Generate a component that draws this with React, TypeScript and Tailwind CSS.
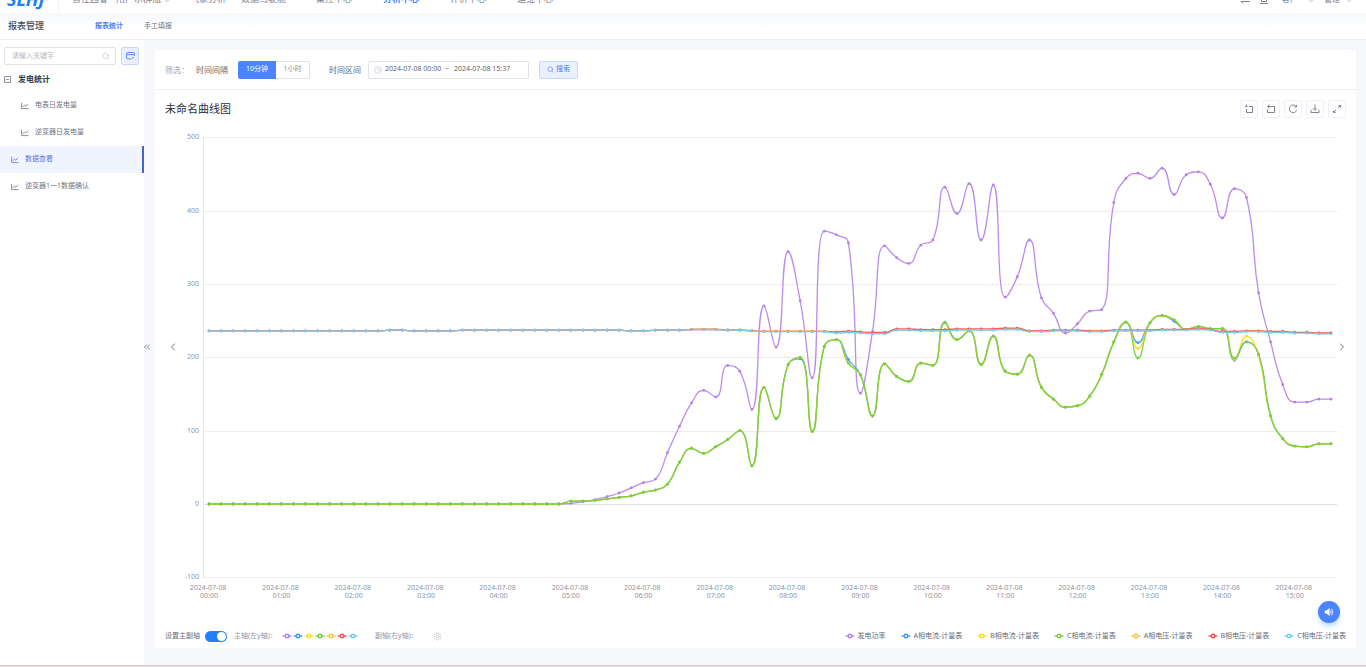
import { useId, useState } from 'react'
import type { ReactNode } from 'react'
import { ChevronDown, ChevronLeft, ChevronRight, ChevronsLeft, Clock, Search, Settings } from 'lucide-react'

type Series = { name: string; color: string; data: number[] }

const zeros: number[] = Array(30).fill(0)

const power = [
  ...zeros,
  1, 3, 6, 10, 15, 22, 29, 34, 70, 106, 138, 155, 146, 189, 181, 129, 270, 214, 344, 277, 172, 372, 367, 356,
  151, 235, 352, 336, 328, 353, 360, 432, 396, 437, 360, 435, 282, 310, 360, 281, 260, 233, 246, 263, 265, 411,
  444, 451, 444, 458, 422, 449, 453, 436, 390, 430, 418, 288, 221, 163, 139, 139, 143, 143,
]

const currentC = [
  ...zeros,
  4, 4, 5, 7, 9, 11, 16, 19, 27, 57, 76, 69, 78, 88, 100, 52, 159, 117, 190, 200, 99, 215, 224, 192,
  176, 120, 191, 174, 167, 192, 189, 247, 224, 236, 190, 229, 181, 177, 203, 159, 143, 132, 134, 147, 177, 221,
  248, 199, 247, 257, 251, 238, 242, 239, 239, 199, 221, 204, 120, 89, 79, 78, 82, 82,
]

const voltageC = [
  236, 236, 236, 236, 236, 236, 236, 236, 236, 236, 236, 236, 236, 236, 236, 237, 237, 236, 236, 236, 236, 237,
  237, 237, 237, 237, 237, 237, 237, 237, 237, 237, 237, 237, 237, 236, 236, 237, 237, 237, 238, 238, 238, 237,
  237, 236, 235, 235, 235, 235, 235, 235, 233, 234, 233, 232, 232, 237, 237, 236, 236, 236, 237, 237, 237, 237,
  238, 238, 235, 235, 236, 236, 236, 235, 235, 236, 236, 236, 236, 237, 237, 237, 238, 237, 234, 234, 235, 235,
  234, 234, 233, 233, 232, 232,
]

const withPoints = (data: number[], points: Record<number, number>) => data.map((v, i) => points[i] ?? v)

const currentA = withPoints(currentC, { 47: 116, 49: 198, 53: 197, 61: 248, 77: 220, 80: 249, 85: 196 })
const currentB = withPoints(currentC, { 77: 212, 85: 197, 86: 229, 87: 202 })
const voltageA = voltageC.map((v, i) => (i > 40 ? v + 0.6 : v))
const voltageB = voltageC.map((v, i) => (i > 67 ? v + 1.2 : i > 51 ? v + 1.8 : i > 45 ? v + 0.5 : v))

const series: Series[] = [
  { name: '发电功率', color: '#b37feb', data: power },
  { name: 'A相电流-计量表', color: '#4096ff', data: currentA },
  { name: 'B相电流-计量表', color: '#fadb14', data: currentB },
  { name: 'C相电流-计量表', color: '#73d13d', data: currentC },
  { name: 'A相电压-计量表', color: '#ffc53d', data: voltageA },
  { name: 'B相电压-计量表', color: '#ff4d4f', data: voltageB },
  { name: 'C相电压-计量表', color: '#72cdf7', data: voltageC },
]

const CHART = { width: 1158, height: 476, left: 23, right: 1157, zero: 376, unit: 440 / 600 }
const step = (CHART.right - CHART.left) / power.length
const px = (i: number) => CHART.left + step * (i + 0.5)
const py = (v: number) => CHART.zero - v * CHART.unit

const clamp = (v: number, a: number, b: number) => Math.min(Math.max(v, Math.min(a, b)), Math.max(a, b))

// bezier smoothing that never overshoots the neighbouring points
function smoothPath(data: number[]) {
  const pts = data.map((v, i) => [px(i), py(v)])
  let d = `M${pts[0][0]} ${pts[0][1]}`
  let c0 = pts[0]
  for (let i = 1; i < pts.length; i++) {
    const [x, y] = pts[i]
    const prev = pts[i - 1]
    const next = pts[i + 1]
    let c1 = [x, y]
    let nextC0 = [x, y]
    if (next) {
      const lenPrev = Math.hypot(x - prev[0], y - prev[1])
      const lenNext = Math.hypot(next[0] - x, next[1] - y)
      const ratio = lenNext / (lenPrev + lenNext)
      nextC0 = [0, 1].map(k =>
        clamp(pts[i][k] + (next[k] - prev[k]) * 0.5 * ratio, pts[i][k], next[k]),
      )
      c1 = [0, 1].map(k =>
        clamp(pts[i][k] - ((nextC0[k] - pts[i][k]) * lenPrev) / lenNext, prev[k], pts[i][k]),
      )
      nextC0 = [0, 1].map(k => pts[i][k] + ((pts[i][k] - c1[k]) * lenNext) / lenPrev)
    }
    d += `C${c0[0].toFixed(1)} ${c0[1].toFixed(1)} ${c1[0].toFixed(1)} ${c1[1].toFixed(1)} ${x.toFixed(1)} ${y.toFixed(1)}`
    c0 = nextC0
  }
  return d
}

function Chart() {
  return (
    <svg viewBox={`0 0 ${CHART.width} ${CHART.height}`} className="h-auto min-w-0 flex-1" role="img" aria-label="未命名曲线图">
      <g shapeRendering="crispEdges">
        {[500, 400, 300, 200, 100, 0, -100].map(v => (
          <line
            key={v}
            x1={CHART.left}
            x2={CHART.right}
            y1={Math.round(py(v)) + 0.5}
            y2={Math.round(py(v)) + 0.5}
            stroke={v === 0 ? '#dcdee8' : '#e6e7ee'}
            strokeDasharray={v === 0 ? undefined : '3 1'}
          />
        ))}
        <line x1={CHART.left + 0.5} x2={CHART.left + 0.5} y1={py(500)} y2={py(-100)} stroke="#e4e6ef" />
      </g>
      <g fontSize="7" fill="#8f95a5">
        {[500, 400, 300, 200, 100, 0, -100].map(v => (
          <text key={v} x={CHART.left - 4} y={py(v) + 2} textAnchor="end">
            {v}
          </text>
        ))}
        {Array.from({ length: 16 }, (_, h) => (
          <g key={h} textAnchor="middle">
            <text x={px(h * 6) - 1} y={462}>2024-07-08</text>
            <text x={px(h * 6)} y={470}>{`${String(h).padStart(2, '0')}:00`}</text>
          </g>
        ))}
      </g>
      {series.map(s => (
        <g key={s.name}>
          <path d={smoothPath(s.data)} fill="none" stroke={s.color} strokeWidth="1.3" opacity="0.9" />
          {s.data.map((v, i) => (
            <circle key={i} cx={px(i)} cy={py(v)} r="1.4" fill={s.color} />
          ))}
        </g>
      ))}
    </svg>
  )
}

function Marker({ color }: { color: string }) {
  return (
    <svg width="10" height="8" viewBox="0 0 10 8" className="shrink-0">
      <path d="M0.5 4H9.5" stroke={color} strokeWidth="1.3" />
      <circle cx="5" cy="4" r="1.8" fill="#fff" stroke={color} strokeWidth="1.4" />
    </svg>
  )
}

function LineIcon() {
  return (
    <svg width="8" height="8" viewBox="0 0 8 8" fill="none" stroke="currentColor" strokeWidth="0.8" className="shrink-0">
      <path d="M0.6 0.8V6.6H7.6M1.8 4.8L3.4 3L4.8 4.2L7.2 1.8" />
    </svg>
  )
}

function MenuItem({ label, nested, active }: { label: string; nested?: boolean; active?: boolean }) {
  return (
    <a
      href="#"
      className={`flex h-[27px] items-center gap-[6px] text-[7px] ${nested ? 'pl-[21px]' : 'pl-[11px]'} ${
        active ? 'border-r-2 border-[#4465c9] bg-[#eff4ff] text-[#5b78dc]' : 'text-[#6f7480]'
      }`}
    >
      <LineIcon />
      {label}
    </a>
  )
}

function ToolButton({ label, children }: { label: string; children: ReactNode }) {
  return (
    <button aria-label={label} className="flex size-[18px] items-center justify-center rounded-xs border border-[#f0f1f8] text-[#7d8496]">
      <svg width="10" height="10" viewBox="0 0 10 10" fill="none" stroke="currentColor" strokeWidth="1">
        {children}
      </svg>
    </button>
  )
}

function TopBar() {
  return (
    <header className="flex h-[13px] items-end overflow-hidden bg-white text-[9px] leading-[14px] text-[#7b8291]">
      <a href="#" className="w-[59px] shrink-0 border-r border-[#f1f2f5] pb-[5px] pl-[7px] text-[18px] font-bold leading-[18px] text-[#2080f0] italic">
        SLHJ
      </a>
      <span className="w-[57px] shrink-0 pb-[7px] pl-[13px]">晋江园睿</span>
      <button className="flex w-[74px] shrink-0 items-end gap-[3px] pb-[7px]">
        用户水群瓶
        <ChevronDown size={6} className="mb-[2px]" />
      </button>
      <nav className="flex flex-1 pb-[7px]">
        <a href="#" className="w-[51px]">气象分析</a>
        <a href="#" className="w-[75px]">数据驾驶舱</a>
        <a href="#" className="w-[67px]">集控中心</a>
        <a href="#" className="w-[67px] font-bold text-[#3d7fff]">分析中心</a>
        <a href="#" className="w-[67px]">评价中心</a>
        <a href="#">运维中心</a>
      </nav>
      <div className="flex items-end gap-[10px] pr-[14px] pb-[7px] text-[8px]">
        <svg width="10" height="8" viewBox="0 0 10 8" fill="none" stroke="currentColor" className="mb-[2px]">
          <path d="M0 2.5H9L7 0.5M10 5.5H1L3 7.5" />
        </svg>
        <svg width="8" height="8" viewBox="0 0 8 8" fill="none" stroke="currentColor" className="mb-[2px]">
          <path d="M1.5 0.5H6.5V5.5H1.5ZM0 7.5H8" />
        </svg>
        <button className="flex items-end gap-[10px] pl-1">
          客户
          <ChevronDown size={6} className="mb-[2px]" />
        </button>
        <button className="flex items-end gap-[6px]">
          管理
          <ChevronDown size={6} className="mb-[2px]" />
        </button>
      </div>
    </header>
  )
}

function Sidebar() {
  const searchId = useId()
  return (
    <aside className="w-[144px] shrink-0 bg-white text-[8px]">
      <div className="flex gap-[5px] px-1 pt-[7px]">
        <label htmlFor={searchId} className="flex h-[18px] w-[112px] items-center rounded-xs border border-[#dfe2e8] pr-[5px] pl-[7px]">
          <input id={searchId} aria-label="关键字" placeholder="请输入关键字" className="w-full min-w-0 text-[7px] outline-none placeholder:text-[#b4b8c1]" />
          <Search size={8} strokeWidth={1.5} className="shrink-0 text-[#b0b5c0]" />
        </label>
        <button aria-label="新建" className="flex size-[18px] items-center justify-center rounded-xs border border-[#c6d8ff] bg-[#e9f0ff] text-[#4a80f5]">
          <svg width="9" height="8" viewBox="0 0 9 8" fill="none" stroke="currentColor" strokeWidth="0.9">
            <path d="M8.3 4V1.2Q8.3 0.5 7.6 0.5H1.4Q0.7 0.5 0.7 1.2V6.2Q0.7 6.9 1.4 6.9H5M0.7 2.6H8.3M5.6 6.9L8 5" />
          </svg>
        </button>
      </div>
      <div className="mt-[2px] flex h-[24px] items-center gap-[7px] pl-1 font-bold text-[#363b47]">
        <svg width="7" height="7" viewBox="0 0 7 7" fill="none" stroke="#737985" strokeWidth="0.8">
          <path d="M0.5 0.5H6.5V6.5H0.5ZM2 3.5H5" />
        </svg>
        发电统计
      </div>
      <nav className="mt-[1px]">
        <MenuItem label="电表日发电量" nested />
        <MenuItem label="逆变器日发电量" nested />
        <MenuItem label="数据查看" active />
        <MenuItem label="逆变器1一1数据确认" />
      </nav>
    </aside>
  )
}

function Filters() {
  const [unit, setUnit] = useState('10分钟')
  return (
    <div className="flex h-[40px] items-center border-b border-[#eeeff3] pl-[10px] text-[8px]">
      <span className="w-[31px] text-[#a3a8b3]">筛选：</span>
      <span className="w-[42px] text-[#666a70]">时间间隔</span>
      <div className="flex h-[18px] text-[7px]">
        {['10分钟', '1小时'].map(u => (
          <button
            key={u}
            onClick={() => setUnit(u)}
            className={
              u === unit
                ? 'w-[38px] rounded-l-xs bg-[#4a85ff] text-white'
                : 'w-[34px] rounded-r-xs border border-l-0 border-[#dfe2e8] text-[#8a8f9b]'
            }
          >
            {u}
          </button>
        ))}
      </div>
      <label htmlFor="from" className="ml-[19px] w-[39px] text-[#666a70]">时间区间</label>
      <div className="flex h-[18px] w-[161px] items-center rounded-xs border border-[#dfe2e8] pl-[5px] text-[7px] text-[#62666f]">
        <Clock size={8} strokeWidth={1.5} className="mr-[3px] shrink-0 text-[#b0b5c0]" />
        <input id="from" defaultValue="2024-07-08 00:00" className="w-[58px] outline-none" />
        <span className="w-[11px] pl-[2px]">~</span>
        <input aria-label="结束时间" defaultValue="2024-07-08 15:37" className="w-[58px] outline-none" />
      </div>
      <button className="ml-[10px] flex h-[18px] w-[39px] items-center justify-center gap-[2px] rounded-xs border border-[#c6d8ff] bg-[#e9f0ff] text-[7px] text-[#4a80f5]">
        <Search size={7} strokeWidth={2} />
        搜索
      </button>
    </div>
  )
}

function ChartFooter() {
  const [dual, setDual] = useState(true)
  return (
    <div className="flex h-[24px] items-center px-[10px] text-[7px] whitespace-nowrap text-[#9398a5]">
      <label htmlFor="dual" className="w-[40px] text-[#6c717d]">设置主副轴</label>
      <span className="relative mr-[7px] h-[11px] w-[22px]">
        <input
          id="dual"
          type="checkbox"
          role="switch"
          checked={dual}
          onChange={e => setDual(e.target.checked)}
          className="block h-[11px] w-[22px] appearance-none rounded-full bg-gray-300 checked:bg-[#2080ff]"
        />
        <span className={`pointer-events-none absolute top-px size-[9px] rounded-full bg-white ${dual ? 'right-px' : 'left-px'}`} />
      </span>
      <span className="w-[48px]">主轴(左y轴)：</span>
      <span className="flex gap-[1px]">
        {series.map(s => (
          <Marker key={s.name} color={s.color} />
        ))}
      </span>
      <span className="ml-[17px] w-[58px]">副轴(右y轴)：</span>
      <button aria-label="设置">
        <Settings size={9} strokeWidth={1.6} className="text-[#b4b8c1]" />
      </button>
      <ul className="ml-auto flex gap-[15px] text-[#666b76]">
        {series.map(s => (
          <li key={s.name} className="flex items-center gap-[3px]">
            <Marker color={s.color} />
            {s.name}
          </li>
        ))}
      </ul>
    </div>
  )
}

export default function App() {
  return (
    <div className="flex min-h-screen flex-col bg-[#f6f8fb] font-['Noto_Sans','Noto_Sans_CJK_SC',sans-serif]">
      <TopBar />
      <div className="flex h-[27px] items-center border-b border-[#eeeff3] bg-linear-to-b from-[#f6f8fa] to-white to-60% pl-2 text-[7px] text-[#6c717d]">
        <h1 className="w-[87px] text-[9px] font-medium text-[#454b59]">报表管理</h1>
        <a href="#" className="w-[49px] font-bold text-[#4a80ff]">报表统计</a>
        <a href="#">手工填报</a>
      </div>
      <div className="flex flex-1">
        <Sidebar />
        <button aria-label="收起" className="flex w-[11px] shrink-0 items-center pb-3 text-[#6c7280]">
          <ChevronsLeft size={10} strokeWidth={2} className="-ml-[2px] shrink-0" />
        </button>
        <main className="mt-[10px] mr-[10px] mb-4 min-w-0 flex-1 self-start bg-white">
          <Filters />
          <div className="flex h-[38px] items-center px-[10px]">
            <h2 className="text-[11px] text-[#2a303d]">未命名曲线图</h2>
            <div className="ml-auto flex gap-[4px]">
              <ToolButton label="区域缩放">
                <path d="M2.5 0.5V3M1 2.5H3.5M5 2.5H8.5V8.5H2.5V5" />
              </ToolButton>
              <ToolButton label="缩放还原">
                <path d="M3.5 0.8L1.5 2.5L3.5 4M1.5 2.5H8.5V8.5H1.5V5.5" />
              </ToolButton>
              <ToolButton label="刷新">
                <path d="M8 2.3A3.8 3.8 0 1 0 8.7 6.2M8.5 0.8V3H6.3" />
              </ToolButton>
              <ToolButton label="下载">
                <path d="M5 0.5V6M3 4.3L5 6.3L7 4.3M1 5.8V8.5H9V5.8" />
              </ToolButton>
              <ToolButton label="全屏">
                <path d="M1.5 8.5L4 6M6 4L8.5 1.5M6.5 1.5H8.5V3.5M1.5 6.5V8.5H3.5" />
              </ToolButton>
            </div>
          </div>
          <div className="flex items-center px-[10px] text-[#6c7280]">
            <button aria-label="上一页" className="flex w-[15px] shrink-0 justify-center pb-[38px]">
              <ChevronLeft size={12} strokeWidth={2} />
            </button>
            <Chart />
            <button aria-label="下一页" className="flex w-2 shrink-0 justify-center pb-[38px]">
              <ChevronRight size={12} strokeWidth={2} className="shrink-0" />
            </button>
          </div>
          <div className="pt-5">
            <ChartFooter />
          </div>
        </main>
      </div>
      <div className="h-[2px] border-t border-[#d3cdd2] bg-[#f0d8dc]" />
      <button aria-label="播放语音" className="fixed right-[26px] bottom-[44px] flex size-[22px] items-center justify-center rounded-full bg-[#4a85ff] shadow-md shadow-blue-300/60">
        <svg width="10" height="10" viewBox="0 0 10 10" fill="#fff">
          <path d="M0.8 3.4H2.4L5.6 0.9V9.1L2.4 6.6H0.8Z" />
          <path d="M6.5 2.6Q8.4 5 6.5 7.4Z" />
          <path d="M7.6 1.6Q10 5 7.6 8.4" fill="none" stroke="#fff" strokeWidth="0.8" />
        </svg>
      </button>
    </div>
  )
}
